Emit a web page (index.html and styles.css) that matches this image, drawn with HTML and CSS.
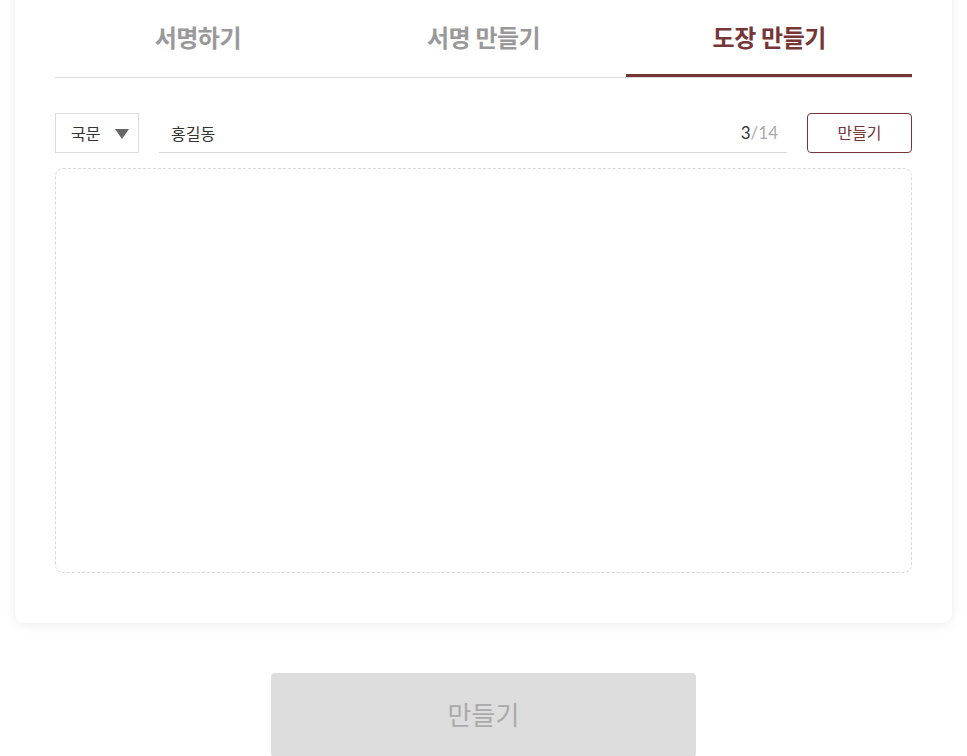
FILE: index.html
```html
<!DOCTYPE html>
<html lang="ko">
<head>
<meta charset="utf-8">
<link rel="stylesheet" href="styles.css">
</head>
<body>
<div class="card">
  <div class="tabs">
    <div class="tab">서명하기</div>
    <div class="tab">서명 만들기</div>
    <div class="tab active">도장 만들기</div>
  </div>
  <div class="controls">
    <div class="select"><span>국문</span><span class="caret"></span></div>
    <div class="input">
      <span class="value">홍길동</span>
      <span class="count"><span class="cur">3</span>/14</span>
    </div>
    <button class="make">만들기</button>
  </div>
  <div class="canvas"></div>
</div>
<div class="footer">
  <button class="big">만들기</button>
</div>
</body>
</html>
```
FILE: styles.css
```css
* { box-sizing: border-box; }
html, body { margin: 0; padding: 0; background: #fff; }
body {
  font-family: Lato, "Noto Sans CJK KR", sans-serif;
  color: #333;
  overflow: hidden;
  height: 756px;
}
.card {
  margin: -20px 15px 0 15px;
  background: #fff;
  border-radius: 10px;
  box-shadow: 0 2px 12px rgba(0,0,0,0.08);
  padding: 40px 40px 50px 40px;
}
.tabs {
  display: flex;
  border-bottom: 1px solid #d9d9d9;
}
.tab {
  flex: 1;
  text-align: center;
  font-size: 24px;
  font-weight: 700;
  color: #999;
  height: 57px;
  line-height: 36px;
  padding-top: 0;
  letter-spacing: -0.5px;
}
.tab.active {
  color: #773636;
  border-bottom: 3px solid #773636;
  margin-bottom: -1px;
  height: 57px;
}
.controls {
  display: flex;
  align-items: stretch;
  margin-top: 35px;
  height: 40px;
}
.select {
  width: 84px;
  border: 1px solid #dcdcdc;
  display: flex;
  align-items: center;
  padding-left: 15px;
  padding-bottom: 1px;
  font-size: 16px;
  color: #333;
}
.caret {
  margin-left: 15px;
  width: 0; height: 0;
  border-left: 7px solid transparent;
  border-right: 7px solid transparent;
  border-top: 10px solid #666;
  margin-top: 2px;
}
.input {
  flex: 1;
  margin-left: 20px;
  margin-right: 20px;
  border-bottom: 1px solid #d9d9d9;
  display: flex;
  align-items: center;
  justify-content: space-between;
  padding: 0 9px 0 12px;
  font-size: 16px;
}
.value { color: #333; }
.count { color: #aaa; font-size: 17px; }
.count .cur { color: #333; }
.make {
  width: 105px;
  border: 1px solid #773636;
  border-radius: 4px;
  background: #fff;
  color: #773636;
  font-family: Lato, "Noto Sans CJK KR", sans-serif;
  font-size: 16px;
  padding: 0 0 2px 0;
}
.canvas {
  margin-top: 15px;
  height: 405px;
  border: 1px dashed #d9d9d9;
  border-radius: 8px;
}
.footer {
  display: flex;
  justify-content: center;
  margin-top: 50px;
}
.big {
  width: 425px;
  height: 84px;
  background: #dddddd;
  border: none;
  border-radius: 4px;
  color: #aaa;
  font-family: Lato, "Noto Sans CJK KR", sans-serif;
  font-size: 26px;
  padding: 0 0 4px 0;
}
```
